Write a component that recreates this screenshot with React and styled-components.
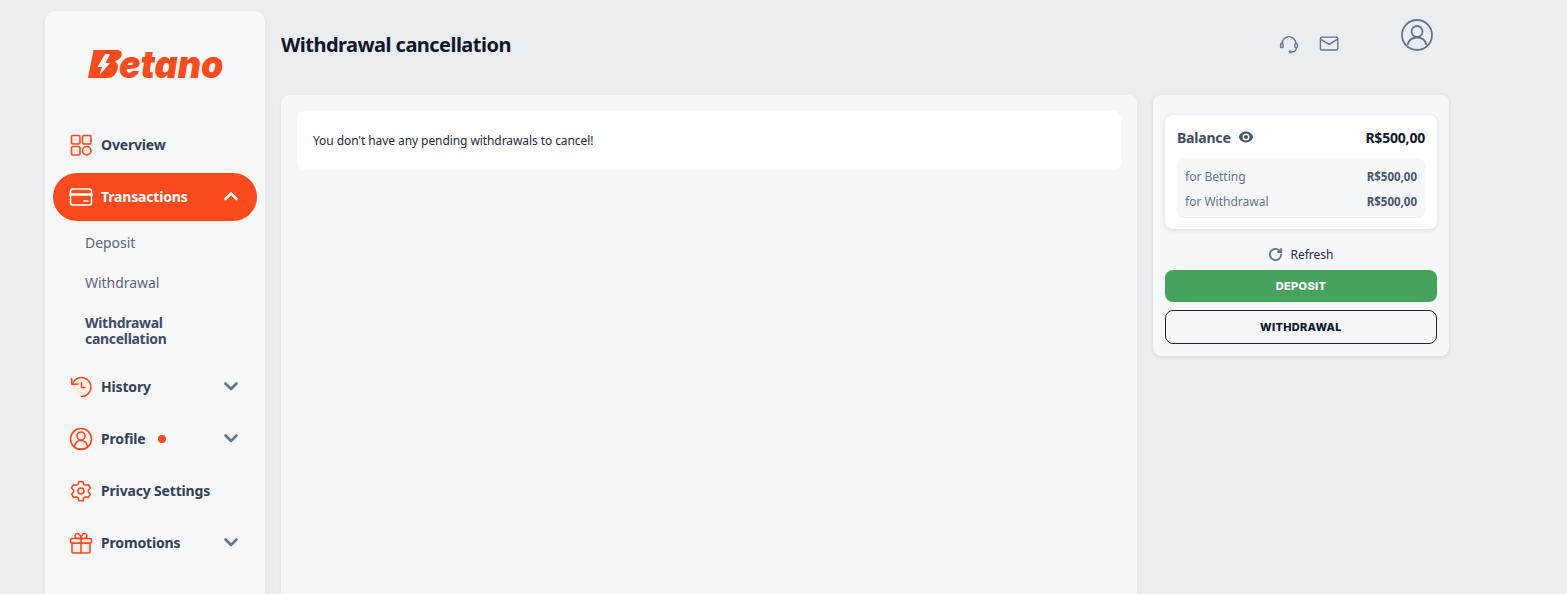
import React from 'react';
import styled, { createGlobalStyle } from 'styled-components';
import { HiEye } from 'react-icons/hi2';

const ORANGE = '#fb4a1c';
const TINT = '#ffeee8';

const GlobalStyle = createGlobalStyle`
  html, body {
    margin: 0;
    height: 100%;
    overflow: hidden;
    background: #ebeef1;
    font-family: "Noto Sans", "Open Sans", sans-serif;
    color: #334155;
  }
`;

const Page = styled.div`
  display: flex;
  gap: 16px;
  height: 583px;
  padding: 11px 0 0 45px;
  overflow: hidden;
`;

const Sidebar = styled.aside`
  flex: 0 0 220px;
  height: 640px;
  box-sizing: border-box;
  padding: 0 8px;
  background: #f7f8fa;
  border-radius: 10px;
  box-shadow: 0 1px 4px rgba(30, 41, 59, 0.07);
`;

const LogoBox = styled.div`
  display: flex;
  justify-content: center;
  height: 106px;
  padding: 30px 0 0 2px;
  box-sizing: border-box;
`;

const LogoSvg = styled.svg`
  display: block;
  overflow: visible;
`;

const Nav = styled.nav`
  display: flex;
  flex-direction: column;
`;

const NavItem = styled.div`
  display: flex;
  align-items: center;
  height: 48px;
  margin-top: 4px;
  padding: 0 16px;
  border-radius: 24px;
  font-size: 14px;
  font-weight: 700;
  letter-spacing: -0.17px;
  color: ${p => (p.$active ? '#fff' : '#334155')};
  background: ${p => (p.$active ? ORANGE : 'transparent')};
  svg.main { margin-right: 8px; flex: none; }
`;

const NavLabel = styled.span`
  margin-top: -2px;
`;

const Dot = styled.span`
  width: 8px;
  height: 8px;
  margin-left: 13px;
  border-radius: 50%;
  background: ${ORANGE};
`;

const Chevron = styled.svg`
  margin: -2px 2px 0 auto;
  flex: none;
`;

const SubNav = styled.div`
  display: flex;
  flex-direction: column;
  padding: 2px 0 0 32px;
`;

const SubItem = styled.div`
  padding: 12px 0;
  width: 110px;
  font-size: 14px;
  line-height: 16px;
  font-weight: ${p => (p.$current ? 700 : 400)};
  letter-spacing: ${p => (p.$current ? '-0.3px' : '-0.05px')};
  color: ${p => (p.$current ? '#3f4d66' : '#5b6579')};
`;

const Content = styled.div`
  flex: 0 0 1168px;
  display: flex;
  flex-direction: column;
`;

const Header = styled.header`
  flex: none;
  display: flex;
  align-items: flex-start;
  height: 84px;
`;

const Title = styled.h1`
  margin: 21px 0 0;
  font-size: 20px;
  line-height: 26px;
  font-weight: 700;
  letter-spacing: -0.53px;
  color: #0f172a;
`;

const HeaderIcons = styled.div`
  display: flex;
  gap: 19px;
  margin: 22px 0 0 auto;
  svg { display: block; }
`;

const Account = styled.div`
  flex: 0 0 96px;
  margin-left: 12px;
  padding-top: 8px;
`;

const Avatar = styled.svg`
  display: block;
  margin-left: 48px;
`;

const HiddenName = styled.div`
  height: 24px;
  margin-top: 4px;
  border-radius: 6px;
  background: rgba(240, 243, 245, 0.3);
  filter: blur(3px);
`;

const Columns = styled.div`
  flex: none;
  display: flex;
  align-items: flex-start;
  gap: 16px;
`;

const MainCard = styled.main`
  flex: 0 0 856px;
  height: 520px;
  box-sizing: border-box;
  padding: 16px;
  background: #f6f7f9;
  border-radius: 8px;
  box-shadow: 0 1px 3px rgba(30, 41, 59, 0.08);
`;

const Notice = styled.div`
  height: 59px;
  display: flex;
  align-items: center;
  padding: 0 16px;
  background: #fff;
  border-radius: 8px;
  font-size: 12px;
  letter-spacing: -0.08px;
  color: #1e293b;
`;

const WalletCard = styled.section`
  flex: 0 0 296px;
  box-sizing: border-box;
  height: 261px;
  padding: 20px 12px 12px;
  background: #f6f7f9;
  border-radius: 8px;
  box-shadow: 0 1px 4px rgba(30, 41, 59, 0.12);
`;

const BalanceBox = styled.div`
  box-sizing: border-box;
  height: 114px;
  padding: 12px;
  background: #fff;
  border-radius: 8px;
  box-shadow: 0 1px 4px rgba(30, 41, 59, 0.14);
`;

const BalanceRow = styled.div`
  display: flex;
  align-items: center;
  height: 20px;
  font-size: 14px;
  font-weight: 700;
  letter-spacing: -0.2px;
  color: #3f4d66;
  svg { margin-left: 7px; color: #475569; }
`;

const Amount = styled.span`
  margin-left: auto;
  color: ${p => (p.$strong ? '#0f172a' : '#475569')};
  font-size: ${p => (p.$strong ? '14px' : '11.5px')};
  font-weight: 700;
`;

const Breakdown = styled.div`
  box-sizing: border-box;
  height: 59px;
  margin-top: 11px;
  padding: 8px 8px 6px;
  display: flex;
  flex-direction: column;
  gap: 5px;
  background: #f6f7f9;
  border-radius: 8px;
  box-shadow: 0 1px 1px rgba(30, 41, 59, 0.08);
`;

const BreakdownRow = styled.div`
  flex: none;
  display: flex;
  align-items: center;
  height: 20px;
  font-size: 12px;
  color: #64748b;
`;

const Refresh = styled.div`
  display: flex;
  justify-content: center;
  align-items: center;
  gap: 7px;
  box-sizing: border-box;
  height: 41px;
  padding-top: 9px;
  font-size: 12px;
  color: #1e293b;
  svg { color: #64748b; }
`;

const ActionButton = styled.button`
  display: block;
  width: 100%;
  box-sizing: border-box;
  height: ${p => (p.$outline ? '34px' : '32px')};
  margin-bottom: 8px;
  padding: 0;
  font-family: Inter, sans-serif;
  font-size: 11px;
  font-weight: 800;
  letter-spacing: 0.3px;
  border-radius: 8px;
  border: ${p => (p.$outline ? '1px solid #1e2430' : '0')};
  color: ${p => (p.$outline ? '#0f172a' : '#fff')};
  background: ${p => (p.$outline ? 'transparent' : '#46a35e')};
`;

const IconBase = ({ children, size = 24, className, stroke = ORANGE, width = 1.6 }) => (
  <svg className={className} width={size} height={size} viewBox="0 0 24 24" fill="none" stroke={stroke} strokeWidth={width} strokeLinecap="round" strokeLinejoin="round">
    {children}
  </svg>
);

const ChevronIcon = ({ up, color = '#64748b' }) => (
  <Chevron width="16" height="16" viewBox="0 0 16 16" fill="none" stroke={color} strokeWidth="2.6" strokeLinecap="round" strokeLinejoin="round">
    <path d={up ? 'M2.5 11 8 5.5l5.5 5.5' : 'M2.5 5.5 8 11l5.5-5.5'} />
  </Chevron>
);

const GridIcon = () => (
  <IconBase className="main">
    <rect x="2.5" y="2.5" width="8.5" height="8.5" rx="1.5" fill={TINT} />
    <rect x="13.5" y="2.5" width="8.5" height="8.5" rx="1.5" fill={TINT} />
    <rect x="2.5" y="13.5" width="8.5" height="8.5" rx="1.5" fill={TINT} />
    <circle cx="17.75" cy="17.75" r="4.25" fill={TINT} />
  </IconBase>
);

const CardIcon = () => (
  <IconBase className="main" stroke="#fff">
    <rect x="1.5" y="4" width="21" height="16" rx="2.5" />
    <path d="M1.5 9.5h21" strokeWidth="2.4" />
    <path d="M15 16h4" />
  </IconBase>
);

const HistoryIcon = () => (
  <IconBase className="main">
    <circle cx="12.500" cy="12" r="9.500" fill={TINT} stroke="none" />
    <path d="M3.500 9A9.500 9.500 0 1 1 12.500 21.500" />
    <path d="M2.500 3.500 3 9.500l6-.5" />
    <path d="M12.500 8v4.500h3.500" />
  </IconBase>
);

const ProfileIcon = () => (
  <IconBase className="main">
    <circle cx="12" cy="12" r="10.5" />
    <path d="M5.500 20c.5-4 3-6.500 6.500-6.500s6 2.500 6.500 6.500c-3.500 2.800-9.500 2.800-13 0Z" fill={TINT} />
    <circle cx="12" cy="9" r="4" fill={TINT} />
  </IconBase>
);

const GearIcon = () => (
  <IconBase className="main">
    <path d="M10 2.500h4l.7 2.800 2 1.100 2.700-.8 2 3.400-2 2 .1 2.200 1.900 2-2 3.400-2.700-.8-2 1.200-.7 2.700h-4l-.7-2.700-2-1.200-2.700.8-2-3.400 2-2V11L2.400 9l2-3.400 2.700.8 2-1.100Z" />
    <circle cx="12" cy="12" r="3" fill={TINT} />
  </IconBase>
);

const GiftIcon = () => (
  <IconBase className="main">
    <rect x="3" y="12" width="18" height="10" rx="1" fill={TINT} />
    <rect x="1.500" y="7.500" width="21" height="4.500" rx="1" fill={TINT} />
    <path d="M12 7.500V22" />
    <path d="M12 7.500H8.500a2.500 2.500 0 1 1 2-4c1 1.200 1.500 4 1.500 4Zm0 0h3.500a2.500 2.500 0 1 0-2-4c-1 1.200-1.500 4-1.500 4Z" />
  </IconBase>
);

const HeadsetIcon = () => (
  <IconBase size={22} stroke="#64748b" width={1.5}>
    <path d="M4.500 11.500a7.500 7.500 0 0 1 15 0" />
    <rect x="2.800" y="11.500" width="2.700" height="4.500" rx="1" />
    <rect x="18.500" y="11.500" width="2.700" height="4.500" rx="1" />
    <path d="M20 16c0 3-2 4.500-5 4.500" />
    <circle cx="13.500" cy="20.500" r="1" fill="#64748b" />
  </IconBase>
);

const MailIcon = () => (
  <IconBase size={22} stroke="#64748b" width={1.5}>
    <rect x="1.500" y="4.500" width="19" height="14" rx="2" />
    <path d="M2 7l9 5.500L20 7" />
  </IconBase>
);

const RefreshIcon = () => (
  <IconBase size={15} stroke="currentColor" width={3}>
    <path d="M21 12a9 9 0 1 1-2.800-6.500L21 8" />
    <path d="M21 3v5h-5" />
  </IconBase>
);

const AvatarIcon = () => (
  <Avatar width="32" height="32" viewBox="0 0 32 32" fill="none" stroke="#64748b" strokeWidth="1.800">
    <circle cx="16" cy="16" r="15" />
    <circle cx="16" cy="12.500" r="5.500" />
    <path d="M6.500 26c1-4.500 4.500-7.500 9.500-7.500s8.500 3 9.500 7.500" />
  </Avatar>
);

const BetanoLogo = () => (
  <LogoSvg width="136" height="46" viewBox="0 -8 136 46">
    <path d="M5.500 1h23c4.500 0 6 2.500 5 5.500-.7 2.500-2.800 4.300-5.500 5.200l-1 1.100c2.300 1 3.400 3.200 2.700 6.200C28.500 26 24.500 29 18.500 29H0Z" fill={ORANGE} />
    <path d="M17 5 9.500 18H14l-2.500 8L22 14h-4.500l4.500-9Z" fill="#f7f8fa" />
    <text transform="translate(31 29) scale(0.92 1)" fontFamily="Inter, sans-serif" fontWeight="900" fontStyle="italic" fontSize="39" fill={ORANGE}>etano</text>
  </LogoSvg>
);

const BalanceLine = ({ label }) => (
  <BreakdownRow>
    {label}
    <Amount>R$500,00</Amount>
  </BreakdownRow>
);

export default function App() {
  return (
    <>
      <GlobalStyle />
      <Page>
        <Sidebar>
          <LogoBox><BetanoLogo /></LogoBox>
          <Nav>
            <NavItem><GridIcon /><NavLabel>Overview</NavLabel></NavItem>
            <NavItem $active><CardIcon /><NavLabel>Transactions</NavLabel><ChevronIcon up color="#fff" /></NavItem>
            <SubNav>
              <SubItem>Deposit</SubItem>
              <SubItem>Withdrawal</SubItem>
              <SubItem $current>Withdrawal cancellation</SubItem>
            </SubNav>
            <NavItem><HistoryIcon /><NavLabel>History</NavLabel><ChevronIcon /></NavItem>
            <NavItem><ProfileIcon /><NavLabel>Profile</NavLabel><Dot /><ChevronIcon /></NavItem>
            <NavItem><GearIcon /><NavLabel>Privacy Settings</NavLabel></NavItem>
            <NavItem><GiftIcon /><NavLabel>Promotions</NavLabel><ChevronIcon /></NavItem>
          </Nav>
        </Sidebar>
        <Content>
          <Header>
            <Title>Withdrawal cancellation</Title>
            <HeaderIcons><HeadsetIcon /><MailIcon /></HeaderIcons>
            <Account>
              <AvatarIcon />
              <HiddenName />
            </Account>
          </Header>
          <Columns>
            <MainCard>
              <Notice>You don't have any pending withdrawals to cancel!</Notice>
            </MainCard>
            <WalletCard>
              <BalanceBox>
                <BalanceRow>
                  Balance <HiEye size={16} />
                  <Amount $strong>R$500,00</Amount>
                </BalanceRow>
                <Breakdown>
                  <BalanceLine label="for Betting" />
                  <BalanceLine label="for Withdrawal" />
                </Breakdown>
              </BalanceBox>
              <Refresh><RefreshIcon />Refresh</Refresh>
              <ActionButton>DEPOSIT</ActionButton>
              <ActionButton $outline>WITHDRAWAL</ActionButton>
            </WalletCard>
          </Columns>
        </Content>
      </Page>
    </>
  );
}
